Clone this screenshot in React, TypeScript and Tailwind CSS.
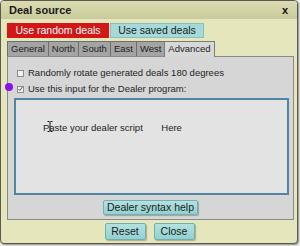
import React from "react";

const font = { fontFamily: '"Liberation Sans", Arial, sans-serif' };

const tabs = ["General", "North", "South", "East", "West"];

const TealButton = ({ label, className }: { label: string; className?: string }) => (
  <button
    className={`bg-gradient-to-b from-[#b2e2e2] to-[#94d0d0] border border-[#6fb0b0] rounded-[2px] text-[#1c1c1c] text-[10.5px] leading-none px-[3px] whitespace-nowrap shadow-[1px_1px_1px_rgba(0,0,0,0.25)] ${className ?? ""}`}
  >
    {label}
  </button>
);

const Check = ({ checked }: { checked?: boolean }) => (
  <span className="w-[7px] h-[7px] border border-[#8a8a8a] bg-[#f2f2f2] flex items-center justify-center shrink-0">
    {checked && (
      <svg width="8" height="8" viewBox="0 0 8 8" className="-mt-[1px]">
        <path d="M1 4.2 L3 6.4 L7 0.8" fill="none" stroke="#222" strokeWidth="1.2" />
      </svg>
    )}
  </span>
);

export default function App() {
  return (
    <div className="w-[300px] h-[246px] bg-[#f4f4f0] relative" style={font}>
      <div className="w-[298px] h-[244px] border border-[#5a5a50] rounded-[4px] bg-[#e6e6bc] shadow-[1px_1px_2px_rgba(0,0,0,0.45)] overflow-hidden flex flex-col">
        <div className="h-[18px] shrink-0 bg-gradient-to-b from-[#dcdcb2] to-[#cacb9c] flex items-center justify-between pl-[8px] pr-[9px]">
          <span className="text-[11px] font-bold text-[#1a1a1a]">Deal source</span>
          <span className="text-[11px] font-bold text-[#111] leading-none">x</span>
        </div>

        <div className="flex pl-[6px] mt-[4px] gap-[1px]">
          <button className="h-[15px] bg-[#d51616] text-white text-[10.5px] leading-none px-[7px] w-[102px]">
            Use random deals
          </button>
          <button className="h-[15px] bg-[#a6dada] border border-[#86c0c0] text-[#1c1c1c] text-[10.5px] leading-none px-[6px] w-[94px]">
            Use saved deals
          </button>
        </div>

        <div className="flex pl-[6px] mt-[3px] items-end">
          {tabs.map((t) => (
            <span
              key={t}
              className="h-[15px] px-[3px] bg-[#a4a4a4] border border-[#6e6e6e] border-b-0 -mr-[1px] text-[9.5px] text-[#1e1e1e] flex items-center"
            >
              {t}
            </span>
          ))}
          <span className="h-[16px] px-[3px] bg-[#d8d8d8] border border-[#7a7a7a] border-b-0 text-[9.5px] text-[#1e1e1e] flex items-center relative -mb-[1px] z-10">
            Advanced
          </span>
        </div>

        <div className="ml-[6px] w-[287px] h-[164px] border border-[#8a8a8a] bg-[#d6d6d6] flex flex-col relative">
          <div className="flex items-center gap-[4px] pl-[9px] mt-[10px] text-[9.5px] text-[#1e1e1e] h-[12px]">
            <Check />
            <span>Randomly rotate generated deals 180 degrees</span>
          </div>
          <div className="flex items-center gap-[4px] pl-[9px] mt-[4px] text-[9.5px] text-[#1e1e1e] h-[12px]">
            <Check checked />
            <span>Use this input for the Dealer program:</span>
          </div>
          <div className="ml-[6px] mt-[3px] w-[275px] h-[97px] border-2 border-[#4f86a4] bg-[#e3e3e3] relative">
            <div className="text-[9.5px] text-[#222] pl-[27px] pt-[21px] whitespace-pre">
              {"Paste your dealer script       Here"}
            </div>
            <svg width="6" height="11" viewBox="0 0 6 11" className="absolute left-[31px] top-[21px]">
              <path d="M0.5 0.5 H2.5 M3.5 0.5 H5.5 M3 1 V10 M0.5 10.5 H2.5 M3.5 10.5 H5.5" stroke="#111" strokeWidth="1" fill="none" />
            </svg>
          </div>
          <div className="flex justify-center mt-[5px]">
            <TealButton label="Dealer syntax help" className="h-[15px] w-[95px]" />
          </div>
        </div>

        <div className="flex justify-center gap-[8px] mt-[3px] pl-[1px]">
          <TealButton label="Reset" className="h-[17px] w-[41px]" />
          <TealButton label="Close" className="h-[17px] w-[41px]" />
        </div>
      </div>
      <span className="absolute left-[5px] top-[83px] w-[8px] h-[8px] rounded-full bg-[#8a10f0]" />
    </div>
  );
}
